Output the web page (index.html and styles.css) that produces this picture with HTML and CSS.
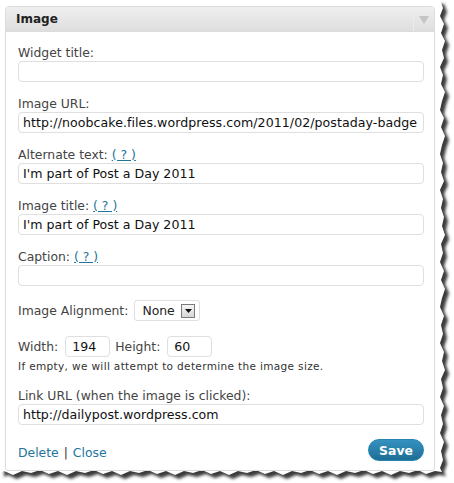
FILE: index.html
```html
<!DOCTYPE html>
<html>
<head>
<meta charset="utf-8">
<link rel="stylesheet" href="styles.css">
</head>
<body>
<div class="sheet">
  <svg class="torn" width="454" height="483" viewBox="0 0 454 483">
    <defs>
      <filter id="blur" x="-10%" y="-10%" width="120%" height="120%"><feGaussianBlur stdDeviation="1.6"/></filter>
    </defs>
    <g id="paper-shape">
      <polygon class="shadow" filter="url(#blur)" transform="translate(4,4)" points="0,0 440,0 443,8 440,16 444,24 441,33 445,41 442,50 444,58 440,67 443,75 441,84 445,92 442,101 440,110 444,118 441,127 445,136 442,145 440,154 443,163 441,172 444,181 440,190 443,199 441,208 444,217 442,226 445,235 441,244 443,253 440,262 444,271 441,280 445,289 442,298 440,307 444,316 441,325 443,334 440,343 444,352 442,361 445,370 441,379 443,388 440,397 444,406 441,415 443,424 440,433 444,442 441,451 443,460 440,468 442,472 435,471 426,474 418,470 409,473 400,471 391,475 382,471 373,474 364,470 355,473 346,471 337,475 328,471 319,474 310,470 301,473 292,471 283,475 274,471 265,474 256,470 247,473 238,471 229,475 220,471 211,474 202,470 193,473 184,471 175,475 166,471 157,474 148,470 139,473 130,471 121,475 112,471 103,474 94,470 85,473 76,471 67,475 58,471 49,474 40,470 31,473 22,471 13,475 4,471 0,473"/>
      <polygon class="paper" points="0,0 440,0 443,8 440,16 444,24 441,33 445,41 442,50 444,58 440,67 443,75 441,84 445,92 442,101 440,110 444,118 441,127 445,136 442,145 440,154 443,163 441,172 444,181 440,190 443,199 441,208 444,217 442,226 445,235 441,244 443,253 440,262 444,271 441,280 445,289 442,298 440,307 444,316 441,325 443,334 440,343 444,352 442,361 445,370 441,379 443,388 440,397 444,406 441,415 443,424 440,433 444,442 441,451 443,460 440,468 442,472 435,471 426,474 418,470 409,473 400,471 391,475 382,471 373,474 364,470 355,473 346,471 337,475 328,471 319,474 310,470 301,473 292,471 283,475 274,471 265,474 256,470 247,473 238,471 229,475 220,471 211,474 202,470 193,473 184,471 175,475 166,471 157,474 148,470 139,473 130,471 121,475 112,471 103,474 94,470 85,473 76,471 67,475 58,471 49,474 40,470 31,473 22,471 13,475 4,471 0,473"/>
    </g>
  </svg>

  <div class="widget">
    <div class="widget-top">
      <span class="widget-title">Image</span>
      <span class="widget-toggle"><svg width="10" height="8" viewBox="0 0 10 8"><polygon points="0,0 10,0 5,8" fill="#c4c4c4"/></svg></span>
    </div>
    <div class="widget-body">
      <div class="field">
        <div class="label">Widget title:</div>
        <div class="input"></div>
      </div>
      <div class="field">
        <div class="label">Image URL:</div>
        <div class="input url">http://noobcake.files.wordpress.com/2011/02/postaday-badge</div>
      </div>
      <div class="field">
        <div class="label">Alternate text: <a class="help">( ? )</a></div>
        <div class="input">I'm part of Post a Day 2011</div>
      </div>
      <div class="field">
        <div class="label">Image title: <a class="help">( ? )</a></div>
        <div class="input">I'm part of Post a Day 2011</div>
      </div>
      <div class="field">
        <div class="label">Caption: <a class="help">( ? )</a></div>
        <div class="input"></div>
      </div>
      <div class="row align-row">
        <span class="label">Image Alignment:</span>
        <span class="select"><span class="select-text">None</span><span class="select-btn"><svg width="7" height="4" viewBox="0 0 7 4"><polygon points="0,0 7,0 3.5,4" fill="#111"/></svg></span></span>
      </div>
      <div class="row size-row">
        <span class="label">Width:</span>
        <span class="input small">194</span>
        <span class="label">Height:</span>
        <span class="input small">60</span>
      </div>
      <div class="note">If empty, we will attempt to determine the image size.</div>
      <div class="field">
        <div class="label">Link URL (when the image is clicked):</div>
        <div class="input">http://dailypost.wordpress.com</div>
      </div>
      <div class="footer">
        <div class="links"><a class="link">Delete</a> <span class="sep">|</span> <a class="link">Close</a></div>
        <span class="save">Save</span>
      </div>
    </div>
  </div>
</div>
</body>
</html>
```
FILE: styles.css
```css
html, body {
  margin: 0;
  padding: 0;
  background: #ffffff;
}
body {
  font-family: "DejaVu Sans", Verdana, sans-serif;
  color: #333;
}
.sheet {
  position: relative;
  z-index: 0;
  width: 454px;
  height: 483px;
  padding: 6px 0 0 5px;
  box-sizing: border-box;
  overflow: hidden;
}
.torn {
  position: absolute;
  left: 0;
  top: 0;
  z-index: -1;
}
.torn .shadow { fill: #3a3a3a; }
.torn .paper { fill: #ffffff; }

.widget {
  width: 430px;
  border: 1px solid #dcdcdc;
  border-radius: 4px 4px 3px 3px;
  background: #fff;
  box-sizing: border-box;
}
.widget-top {
  height: 24px;
  display: flex;
  align-items: center;
  justify-content: space-between;
  background: linear-gradient(#efefef, #dedede);
  border-bottom: 1px solid #dcdcdc;
  border-radius: 3px 3px 0 0;
}
.widget-title {
  padding-left: 10px;
  font-weight: bold;
  font-size: 12px;
  color: #222;
}
.widget-toggle {
  width: 21px;
  height: 24px;
  border-left: 1px solid #ececec;
  display: flex;
  align-items: center;
  justify-content: center;
  padding-top: 2px;
  box-sizing: border-box;
}
.widget-body {
  padding: 13px 10px 9px 12px;
}
.field {
  margin-bottom: 14px;
}
.label {
  font-size: 12.4px;
  line-height: 16px;
  color: #444;
  white-space: nowrap;
}
.help {
  color: #21759b;
  text-decoration: underline;
}
.input {
  display: block;
  height: 21px;
  box-sizing: border-box;
  border: 1px solid #dfdfdf;
  border-radius: 4px;
  background: #fff;
  padding: 0 4px;
  font-size: 12.6px;
  line-height: 19px;
  color: #111;
  white-space: nowrap;
  overflow: hidden;
}
.input.url {
  padding-right: 0;
  letter-spacing: 0.05px;
}
.row {
  display: flex;
  align-items: center;
  height: 21px;
}
.align-row {
  margin-bottom: 15px;
}
.align-row .select {
  margin-left: 6px;
}
.select {
  display: flex;
  align-items: center;
  width: 66px;
  height: 21px;
  box-sizing: border-box;
  border: 1px solid #dfdfdf;
  border-radius: 3px;
  padding: 0 4px 0 7px;
  justify-content: space-between;
}
.select-text {
  font-size: 12.4px;
  color: #222;
}
.select-btn {
  width: 14px;
  height: 14px;
  box-sizing: border-box;
  border: 1px solid #7a7a7a;
  background: linear-gradient(#f6f6f6, #d6d6d6);
  display: flex;
  align-items: center;
  justify-content: center;
}
.size-row .input.small {
  display: flex;
  align-items: center;
  width: 45px;
  margin: 0 5px 0 7px;
  padding: 0 6px;
}
.note {
  margin-top: 3px;
  font-size: 10.5px;
  line-height: 13px;
  color: #333;
  margin-bottom: 15px;
  letter-spacing: 0.35px;
}
.footer {
  margin-top: 14px;
  display: flex;
  align-items: center;
  justify-content: space-between;
}
.links {
  font-size: 12.4px;
  padding-top: 4px;
  color: #333;
}
.link {
  color: #21759b;
}
.sep {
  padding: 0 1px;
}
.save {
  width: 56px;
  height: 22px;
  box-sizing: border-box;
  border-radius: 11px;
  border: 1px solid #2682ae;
  background: linear-gradient(#3591c0, #1e6e95);
  color: #fff;
  font-weight: bold;
  font-size: 12.4px;
  display: flex;
  align-items: center;
  justify-content: center;
}
```
